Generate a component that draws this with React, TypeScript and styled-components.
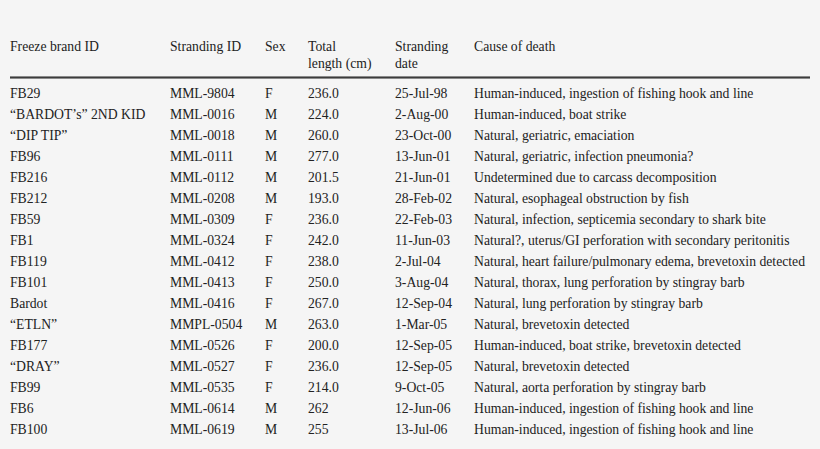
import styled, { createGlobalStyle } from 'styled-components';

const GlobalStyle = createGlobalStyle`
    html, body {
        margin: 0;
        padding: 0;
        background: #f5f5f5;
    }
`;

type Row = [string, string, string, string, string, string];

const rows: Row[] = [
    ['FB29', 'MML-9804', 'F', '236.0', '25-Jul-98', 'Human-induced, ingestion of fishing hook and line'],
    ['“BARDOT’s” 2ND KID', 'MML-0016', 'M', '224.0', '2-Aug-00', 'Human-induced, boat strike'],
    ['“DIP TIP”', 'MML-0018', 'M', '260.0', '23-Oct-00', 'Natural, geriatric, emaciation'],
    ['FB96', 'MML-0111', 'M', '277.0', '13-Jun-01', 'Natural, geriatric, infection pneumonia?'],
    ['FB216', 'MML-0112', 'M', '201.5', '21-Jun-01', 'Undetermined due to carcass decomposition'],
    ['FB212', 'MML-0208', 'M', '193.0', '28-Feb-02', 'Natural, esophageal obstruction by fish'],
    ['FB59', 'MML-0309', 'F', '236.0', '22-Feb-03', 'Natural, infection, septicemia secondary to shark bite'],
    ['FB1', 'MML-0324', 'F', '242.0', '11-Jun-03', 'Natural?, uterus/GI perforation with secondary peritonitis'],
    ['FB119', 'MML-0412', 'F', '238.0', '2-Jul-04', 'Natural, heart failure/pulmonary edema, brevetoxin detected'],
    ['FB101', 'MML-0413', 'F', '250.0', '3-Aug-04', 'Natural, thorax, lung perforation by stingray barb'],
    ['Bardot', 'MML-0416', 'F', '267.0', '12-Sep-04', 'Natural, lung perforation by stingray barb'],
    ['“ETLN”', 'MMPL-0504', 'M', '263.0', '1-Mar-05', 'Natural, brevetoxin detected'],
    ['FB177', 'MML-0526', 'F', '200.0', '12-Sep-05', 'Human-induced, boat strike, brevetoxin detected'],
    ['“DRAY”', 'MML-0527', 'F', '236.0', '12-Sep-05', 'Natural, brevetoxin detected'],
    ['FB99', 'MML-0535', 'F', '214.0', '9-Oct-05', 'Natural, aorta perforation by stingray barb'],
    ['FB6', 'MML-0614', 'M', '262', '12-Jun-06', 'Human-induced, ingestion of fishing hook and line'],
    ['FB100', 'MML-0619', 'M', '255', '13-Jul-06', 'Human-induced, ingestion of fishing hook and line'],
];

const headers = ['Freeze brand ID', 'Stranding ID', 'Sex', 'Total\nlength (cm)', 'Stranding\ndate', 'Cause of death'];

const App = () => {
    return (
        <>
            <GlobalStyle />
            <Page>
                <HeaderRow>
                    {headers.map((h) => (
                        <HeadCell key={h}>{h}</HeadCell>
                    ))}
                </HeaderRow>

                <Rule />

                <Body>
                    {rows.map((r) => (
                        <DataRow key={r[1]}>
                            {r.map((c, i) => (
                                <Cell key={i}>{c}</Cell>
                            ))}
                        </DataRow>
                    ))}
                </Body>
            </Page>
        </>
    );
};

export default App;

const Page = styled.div`
    width: 800px;
    padding: 38px 10px 0 10px;
    font-family: 'Liberation Serif', 'Times New Roman', serif;
    font-size: 13.7px;
    color: #222;
`;

const columns = '160px 95px 43px 87px 79px 1fr';

const HeaderRow = styled.div`
    display: grid;
    grid-template-columns: ${columns};
    line-height: 17px;
    padding-bottom: 4px;
`;

const HeadCell = styled.div`
    white-space: pre-line;
`;

const Rule = styled.div`
    height: 1px;
    border-top: 1px solid #8a8a8a;
    border-bottom: 1px solid #8a8a8a;
    background: #3c3c3c;
`;

const Body = styled.div`
    padding-top: 4px;
`;

const DataRow = styled.div`
    display: grid;
    grid-template-columns: ${columns};
    height: 21px;
    line-height: 21px;
`;

const Cell = styled.div`
    white-space: nowrap;
`;
